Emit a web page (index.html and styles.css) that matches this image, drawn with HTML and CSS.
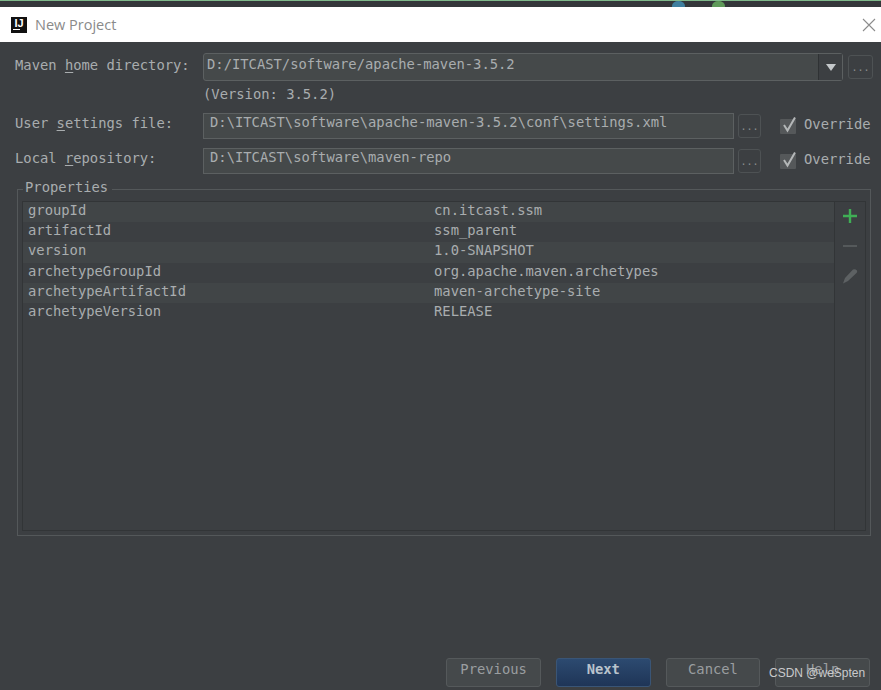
FILE: index.html
```html
<!DOCTYPE html>
<html lang="en">
<head>
    <meta charset="UTF-8">
    <title>New Project</title>
    <link rel="stylesheet" href="styles.css">
</head>
<body>
    <div class="strip">
        <span class="blob blue"></span>
        <span class="blob green"></span>
    </div>

    <div class="titlebar">
        <span class="logo">IJ</span>
        <span class="title">New Project</span>
        <svg class="close" width="14" height="14" viewBox="0 0 14 14"><path d="M1 1L13 13M13 1L1 13" stroke="#8c8c8c" stroke-width="1.1" fill="none"/></svg>
    </div>

    <div class="dialog">
        <div class="form-row first">
            <label class="label">Maven <u>h</u>ome directory:</label>
            <div class="combo">
                <span class="combo-text">D:/ITCAST/software/apache-maven-3.5.2</span>
                <span class="combo-arrow"><svg width="10" height="7" viewBox="0 0 10 7"><path d="M0 0H10L5 7Z" fill="#c4c8ca"/></svg></span>
            </div>
            <button class="browse wide">...</button>
        </div>
        <div class="version">(Version: 3.5.2)</div>
        <div class="form-row">
            <label class="label">User <u>s</u>ettings file:</label>
            <div class="field">D:\ITCAST\software\apache-maven-3.5.2\conf\settings.xml</div>
            <button class="browse">...</button>
            <span class="check"><svg width="17" height="18" viewBox="0 0 17 18"><rect x="0" y="3" width="16" height="15" rx="1" fill="#55585a"/><path d="M4 9L7.500 14.500L15 1.500" stroke="#b4b7b8" stroke-width="2" fill="none"/></svg></span>
            <span class="override">Override</span>
        </div>
        <div class="form-row second">
            <label class="label">Local <u>r</u>epository:</label>
            <div class="field">D:\ITCAST\software\maven-repo</div>
            <button class="browse">...</button>
            <span class="check"><svg width="17" height="18" viewBox="0 0 17 18"><rect x="0" y="3" width="16" height="15" rx="1" fill="#55585a"/><path d="M4 9L7.500 14.500L15 1.500" stroke="#b4b7b8" stroke-width="2" fill="none"/></svg></span>
            <span class="override">Override</span>
        </div>

        <div class="group">
            <div class="group-title">Properties</div>
            <div class="props">
                <div class="rows">
                    <div class="row"><span class="key">groupId</span><span>cn.itcast.ssm</span></div>
                    <div class="row odd"><span class="key">artifactId</span><span>ssm_parent</span></div>
                    <div class="row"><span class="key">version</span><span>1.0-SNAPSHOT</span></div>
                    <div class="row odd"><span class="key">archetypeGroupId</span><span>org.apache.maven.archetypes</span></div>
                    <div class="row"><span class="key">archetypeArtifactId</span><span>maven-archetype-site</span></div>
                    <div class="row odd"><span class="key">archetypeVersion</span><span>RELEASE</span></div>
                </div>
                <div class="tools">
                    <svg width="16" height="16" viewBox="0 0 16 16"><path d="M8 1V15M1 8H15" stroke="#3fae55" stroke-width="2.400" fill="none"/></svg>
                    <svg width="16" height="16" viewBox="0 0 16 16"><path d="M1 8H15" stroke="#55595b" stroke-width="2" fill="none"/></svg>
                    <svg width="16" height="16" viewBox="0 0 16 16"><path d="M1 15.500L3 10L11 1.500Q13 0.500 15 2.500Q15.500 4 14.500 5L6 13Z" fill="#5d6163"/></svg>
                </div>
            </div>
        </div>

        <div class="buttons">
            <button class="btn">Previous</button>
            <button class="btn primary">Next</button>
            <button class="btn">Cancel</button>
            <button class="btn">Help</button>
        </div>
    </div>

    <span class="watermark">CSDN @weSpten</span>
</body>
</html>
```

FILE: styles.css
```css
html, body {
    margin: 0;
    height: 690px;
    overflow: hidden;
}
body {
    background: #3c3f42;
    color: #a9adaf;
    font-family: "DejaVu Sans Mono", monospace;
    font-size: 13.82px;
    position: relative;
}
u {
    text-underline-offset: 2px;
}
button {
    font-family: inherit;
    cursor: pointer;
}

.strip {
    height: 7px;
    box-sizing: border-box;
    background: #34373a;
    border-top: 1px solid #7fb98a;
    display: flex;
    padding-left: 672px;
    overflow: hidden;
}
.blob {
    width: 13px;
    height: 10px;
    border-radius: 50%;
}
.blob.blue {
    background: #3f7f9f;
}
.blob.green {
    background: #5f9a5a;
    margin-left: 27px;
}

.titlebar {
    height: 35px;
    background: #fff;
    display: flex;
    align-items: center;
    padding: 0 5px 0 11px;
}
.logo {
    width: 16px;
    height: 16px;
    background: #111;
    color: #fff;
    font-family: "Liberation Sans", sans-serif;
    font-size: 11px;
    font-weight: bold;
    line-height: 12px;
    text-align: center;
}
.logo::after {
    content: "";
    display: block;
    width: 7px;
    height: 1px;
    margin: 0 0 0 2px;
    background: #fff;
}
.title {
    margin-left: 8px;
    font-family: "Open Sans", sans-serif;
    font-size: 14.5px;
    color: #8a8a8a;
    flex: 1;
}

.dialog {
    padding-top: 11px;
}

.form-row {
    display: flex;
    align-items: center;
    height: 26px;
    padding-left: 15px;
}
.form-row.first {
    height: 28px;
}
.form-row.second {
    margin-top: 9px;
}
.label {
    width: 188px;
    flex: none;
    margin-top: -6px;
}
.first .label {
    margin-top: -4px;
}

.combo, .field {
    box-sizing: border-box;
    height: 100%;
    background: #45494a;
    border: 1px solid #5c6061;
}
.combo {
    width: 640px;
    display: flex;
    border-radius: 3px;
}
.combo-text {
    flex: 1;
    padding: 2px 0 0 3px;
}
.combo-arrow {
    width: 23px;
    background: #3c3f42;
    border-left: 1px solid #2f3234;
    display: flex;
    align-items: center;
    justify-content: center;
}
.field {
    width: 531px;
    padding: 0 0 0 6px;
}

.browse {
    box-sizing: border-box;
    width: 23px;
    height: 24px;
    margin-left: 4px;
    padding: 0;
    background: #3c3f42;
    border: 1px solid #4e5254;
    border-radius: 3px;
    color: #8a8e90;
    font-size: 10px;
}
.browse.wide {
    width: 25px;
    margin-left: 5px;
}

.check {
    display: flex;
    margin-left: 19px;
    margin-top: -2px;
}
.override {
    margin-left: 7px;
    margin-top: -5px;
}

.version {
    height: 32px;
    padding-left: 203px;
    line-height: 27px;
}

.group {
    box-sizing: border-box;
    width: 854px;
    height: 347px;
    margin: 15px 0 0 17px;
    padding: 0 4px;
    border: 1px solid #54585a;
}
.group-title {
    width: fit-content;
    margin: -12px 0 0 1px;
    padding: 0 4px 0 2px;
    background: #3c3f42;
    line-height: 18px;
}

.props {
    box-sizing: border-box;
    height: 330px;
    margin-top: 5px;
    display: flex;
    background: #3c3f42;
    border: 1px solid #323537;
}
.rows {
    flex: 1;
    border-right: 1px solid #323537;
}
.row {
    display: flex;
    height: 20.2px;
    line-height: 17px;
    padding-left: 5px;
    background: #414547;
}
.row.odd {
    background: #3c3f42;
}
.key {
    width: 406px;
}
.tools {
    width: 30px;
    display: flex;
    flex-direction: column;
    align-items: center;
    gap: 14px;
    padding-top: 6px;
}

.buttons {
    display: flex;
    gap: 15px;
    justify-content: flex-end;
    margin-top: 122px;
    padding-right: 11px;
}
.btn {
    box-sizing: border-box;
    width: 94.7px;
    height: 29px;
    padding: 0 0 7px;
    background: #45494b;
    border: 1px solid #55595b;
    border-radius: 3px;
    color: #9a9ea0;
    font-size: 13.82px;
}
.btn.primary {
    background: linear-gradient(#2c4a70, #1f3557);
    border-color: #3a5576;
    color: #b9c3cc;
    font-weight: bold;
}

.watermark {
    position: absolute;
    left: 769px;
    top: 666px;
    font-family: "Liberation Sans", sans-serif;
    font-size: 12px;
    color: #c9cacb;
}
```
